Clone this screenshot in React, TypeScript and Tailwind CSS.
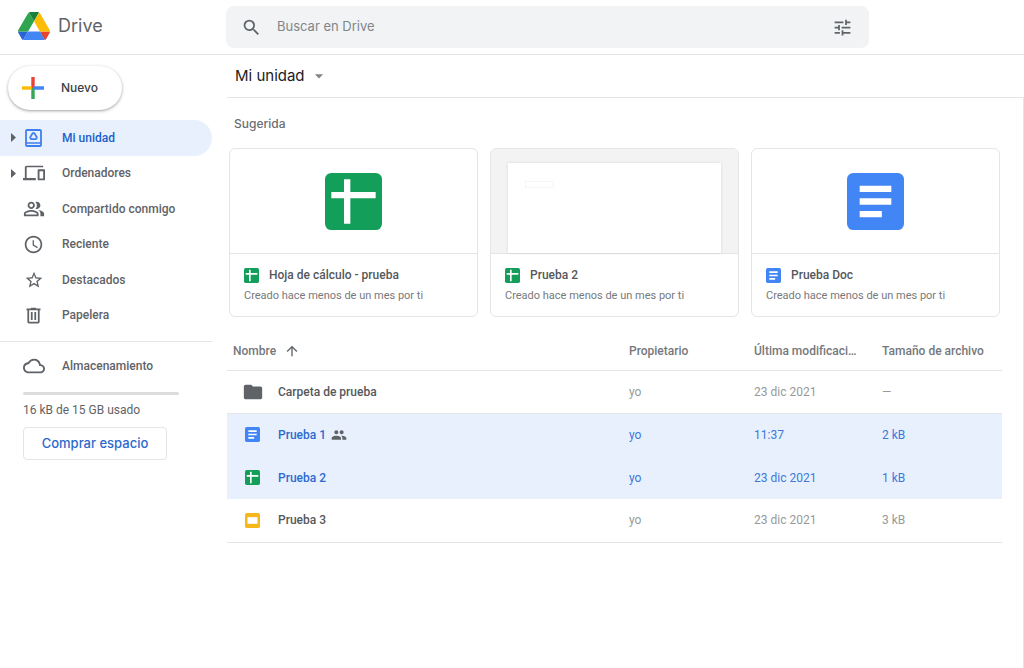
import type { ReactNode } from "react";
import {
  MdAccessTime,
  MdArrowDropDown,
  MdArrowUpward,
  MdFolder,
  MdOutlineCloud,
  MdOutlinePeopleAlt,
  MdPeople,
  MdSearch,
  MdStarOutline,
  MdTune,
} from "react-icons/md";
import { clsx } from "clsx";

type FileKind = "folder" | "doc" | "sheet" | "slides";

interface NavItem {
  label: string;
  icon: ReactNode;
  expandable?: boolean;
  active?: boolean;
}

interface FileRow {
  name: string;
  kind: FileKind;
  modified: string;
  size: string;
  shared?: boolean;
  selected?: boolean;
}

function DriveLogo() {
  return (
    <svg viewBox="0 0 87.3 78" className="w-8" aria-hidden="true">
      <path fill="#2a63d6" d="m6.6 66.85 3.85 6.65c.8 1.4 1.95 2.5 3.3 3.3l13.75-23.8h-27.5c0 1.55.4 3.1 1.2 4.5z" />
      <path fill="#2fa550" d="m43.65 25-13.75-23.8c-1.35.8-2.5 1.9-3.3 3.3l-25.4 44a9.06 9.06 0 0 0-1.2 4.5h27.5z" />
      <path fill="#e8442f" d="m73.55 76.8c1.35-.8 2.5-1.9 3.3-3.3l1.6-2.75 7.65-13.25c.8-1.4 1.2-2.95 1.2-4.5h-27.5l5.85 11.5z" />
      <path fill="#17803a" d="m43.65 25 13.75-23.8c-1.35-.8-2.9-1.2-4.5-1.2h-18.5c-1.6 0-3.15.45-4.5 1.2z" />
      <path fill="#4285f4" d="m59.8 53h-32.3l-13.75 23.8c1.35.8 2.9 1.2 4.5 1.2h50.8c1.6 0 3.15-.45 4.5-1.2z" />
      <path fill="#fdbc04" d="m73.4 26.5-12.7-22c-.8-1.4-1.95-2.5-3.3-3.3l-13.75 23.8 16.15 28h27.45c0-1.55-.4-3.1-1.2-4.5z" />
    </svg>
  );
}

function PlusIcon() {
  return (
    <svg viewBox="0 0 22 22" className="size-[22px]" aria-hidden="true">
      <path fill="#ea4335" d="M9.3 0h3.4v11H9.3z" />
      <path fill="#34a853" d="M9.3 11h3.4v11H9.3z" />
      <path fill="#fbbc04" d="M0 9.3h9.3v3.4H0z" />
      <path fill="#4285f4" d="M11 9.3h11v3.4h-9.3L11 11z" />
    </svg>
  );
}

function ExpandArrow() {
  return (
    <svg viewBox="0 0 5 9" className="h-[9px] w-[5px]" fill="currentColor" aria-hidden="true">
      <path d="M0 0l5 4.5L0 9z" />
    </svg>
  );
}

function MyDriveIcon() {
  return (
    <svg viewBox="0 0 17 18" className="h-[18px] w-[17px] text-[#3f7fec]" fill="none" stroke="currentColor" aria-hidden="true">
      <rect x="1" y="1" width="15" height="16" rx="1" strokeWidth="1.8" />
      <path d="M1 14h15" strokeWidth="1.5" />
      <path d="M7.6 4.2h1.8l2.5 4.3-.9 1.6H6l-.9-1.6z" strokeWidth="1.7" strokeLinejoin="round" />
    </svg>
  );
}

function DevicesIcon() {
  return (
    <svg viewBox="0 0 24 24" className="size-[22px]" fill="currentColor" aria-hidden="true">
      <path d="M4 5.7h18V4H4c-1.1 0-2 .9-2 2v11.5H0V20h14v-2.5H4V5.700zM23 8h-6c-.55 0-1 .45-1 1v10c0 .55.45 1 1 1h6c.55 0 1-.45 1-1V9c0-.55-.45-1-1-1zm-1 10h-4v-8h4v8z" />
    </svg>
  );
}

function TrashIcon() {
  return (
    <svg viewBox="0 0 24 24" className="size-[21px]" fill="currentColor" aria-hidden="true">
      <path d="M15 4V3H9v1H4v2h1v13c0 1.1.9 2 2 2h10c1.1 0 2-.9 2-2V6h1V4h-5zm2 15H7V6h10v13zM9 8h2v9H9zm4 0h2v9h-2z" />
    </svg>
  );
}

function FileIcon({ kind, className }: { kind: FileKind; className: string }) {
  if (kind === "folder") {
    return <MdFolder className="size-[22px] text-[#5f6368]" />;
  }
  return (
    <svg viewBox="0 0 18 18" className={className} aria-hidden="true">
      {kind === "doc" && (
        <>
          <rect width="18" height="18" rx="2" fill="#4285f4" />
          <path fill="#fff" d="M4 4h10v2H4zm0 4h10v2H4zm0 4h7v2H4z" />
        </>
      )}
      {kind === "sheet" && (
        <>
          <rect width="18" height="18" rx="2" fill="#139e59" />
          <path fill="#fff" d="M6 2h2v4h8v2H8v8H6V8H2V6h4z" />
        </>
      )}
      {kind === "slides" && (
        <>
          <rect width="18" height="18" rx="2" fill="#f4b81c" />
          <path fill="#fff" d="M3 5h12v8H3z" />
        </>
      )}
    </svg>
  );
}

const navItems: NavItem[] = [
  { label: "Mi unidad", icon: <MyDriveIcon />, expandable: true, active: true },
  { label: "Ordenadores", icon: <DevicesIcon />, expandable: true },
  { label: "Compartido conmigo", icon: <MdOutlinePeopleAlt className="size-[22px]" /> },
  { label: "Reciente", icon: <MdAccessTime className="size-[21px]" /> },
  { label: "Destacados", icon: <MdStarOutline className="size-[20px]" /> },
  { label: "Papelera", icon: <TrashIcon /> },
];

const suggested: { name: string; kind: FileKind; preview?: boolean }[] = [
  { name: "Hoja de cálculo - prueba", kind: "sheet" },
  { name: "Prueba 2", kind: "sheet", preview: true },
  { name: "Prueba Doc", kind: "doc" },
];

const files: FileRow[] = [
  { name: "Carpeta de prueba", kind: "folder", modified: "23 dic 2021", size: "—" },
  { name: "Prueba 1", kind: "doc", modified: "11:37", size: "2 kB", shared: true, selected: true },
  { name: "Prueba 2", kind: "sheet", modified: "23 dic 2021", size: "1 kB", selected: true },
  { name: "Prueba 3", kind: "slides", modified: "23 dic 2021", size: "3 kB" },
];

function Header() {
  return (
    <header className="flex h-[55px] items-center border-b border-[#e4e5e7]">
      <a href="#" className="flex w-[226px] shrink-0 items-center gap-2 pb-[2px] pl-[18px] font-['Inter',sans-serif] text-lg text-[#5f6368]">
        <DriveLogo />
        Drive
      </a>
      <form role="search" className="flex h-[42px] max-w-[643px] flex-1 items-center rounded-lg bg-[#f1f3f4] pr-4 pl-[15px] text-[#5f6368]">
        <button type="button" aria-label="Buscar">
          <MdSearch className="size-[21px]" />
        </button>
        <input
          type="text"
          aria-label="Buscar en Drive"
          placeholder="Buscar en Drive"
          className="ml-[15px] min-w-0 flex-1 bg-transparent font-['Inter',sans-serif] text-[13px] outline-none placeholder:text-[#80868b]"
        />
        <button type="button" aria-label="Opciones de búsqueda">
          <MdTune className="size-[21px]" />
        </button>
      </form>
    </header>
  );
}

function Sidebar() {
  return (
    <aside className="w-[212px] shrink-0 text-xs text-[#5f6368]">
      <button
        type="button"
        className="mt-[11px] ml-2 flex h-[44px] w-[114px] items-center gap-[17px] rounded-full bg-white pl-[14px] font-['Inter',sans-serif] text-xs font-medium text-[#3c4043] shadow-[0_1px_2px_rgba(60,64,67,0.3),0_1px_3px_1px_rgba(60,64,67,0.15)]"
      >
        <PlusIcon />
        Nuevo
      </button>
      <nav className="mt-[10px] grid h-[213px] grid-rows-6 font-medium">
        {navItems.map((item) => (
          <a
            key={item.label}
            href="#"
            className={clsx(
              "flex items-center rounded-r-full pl-[11px]",
              item.active && "bg-[#e8f0fe] text-[#1a61c9]",
            )}
          >
            <span className="w-[10px] text-[#5f6368]">
              {item.expandable && <ExpandArrow />}
            </span>
            <span className="flex w-[25px] justify-center">{item.icon}</span>
            <span className="ml-4">{item.label}</span>
          </a>
        ))}
      </nav>
      <section className="mt-2 border-t border-[#e4e5e7] pt-3 pl-[23px]">
        <a href="#" className="flex h-6 items-center gap-[17px] font-medium">
          <MdOutlineCloud className="size-[22px]" />
          Almacenamiento
        </a>
        <div
          role="progressbar"
          aria-label="Almacenamiento usado"
          aria-valuenow={0}
          className="mt-[14px] h-[3px] w-[156px] rounded-sm bg-[#dcdcdc]"
        />
        <p className="mt-[7px] leading-4">16 kB de 15 GB usado</p>
        <button
          type="button"
          className="mt-[9px] h-[33px] w-[144px] rounded border border-[#e4e5e7] font-['Inter',sans-serif] text-[13px] font-medium text-[#2b68cc]"
        >
          Comprar espacio
        </button>
      </section>
    </aside>
  );
}

function Suggested() {
  return (
    <section className="pr-[23px] pl-[2px]">
      <h2 className="pt-[17px] pl-[5px] font-['Inter',sans-serif] text-xs leading-[18px] font-medium text-[#6a6e73]">
        Sugerida
      </h2>
      <div className="mt-[15px] grid grid-cols-3 gap-3">
        {suggested.map((file) => (
          <a key={file.name} href="#" className="overflow-hidden rounded-md border border-[#e4e5e7]">
            <div
              className={clsx(
                "flex h-[105px] justify-center border-b border-[#e4e5e7]",
                file.preview ? "items-end bg-[#f3f3f3] px-[17px]" : "items-center",
              )}
            >
              {file.preview ? (
                <div className="h-[90px] flex-1 bg-white pt-[18px] pl-[17px] shadow-[0_0_3px_rgba(0,0,0,0.12)]">
                  <div className="h-[7px] w-[29px] border border-[#f5f5f5]" />
                </div>
              ) : (
                <FileIcon kind={file.kind} className="size-[57px]" />
              )}
            </div>
            <div className="px-[14px] pt-3 pb-3">
              <div className="flex h-[18px] items-center gap-[10px] text-xs font-medium text-[#55585c]">
                <FileIcon kind={file.kind} className="size-[15px]" />
                {file.name}
              </div>
              <p className="mt-1 text-[11px] leading-4 text-[#77797d]">
                Creado hace menos de un mes por ti
              </p>
            </div>
          </a>
        ))}
      </div>
    </section>
  );
}

function FileTable() {
  return (
    <div className="pr-[21px]">
      <table className="mt-4 w-full table-fixed text-left text-xs">
        <thead>
          <tr className="h-[37px] border-b border-[#e4e5e7] text-[#75787c]">
            <th className="pl-[6px] font-medium">
              <span className="flex items-center gap-2">
                Nombre
                <MdArrowUpward className="size-4 text-[#5f6368]" />
              </span>
            </th>
            <th className="w-[125px] font-medium">Propietario</th>
            <th className="w-[128px] truncate pr-6 font-medium">Última modificación</th>
            <th className="w-[120px] font-medium">Tamaño de archivo</th>
          </tr>
        </thead>
        <tbody>
          {files.map((file) => (
            <tr
              key={file.name}
              className={clsx(
                "h-[43px]",
                file.selected ? "bg-[#e8f0fe] text-[#3c78d8]" : "border-b border-[#e4e5e7] text-[#97999c]",
              )}
            >
              <td>
                <div className="flex items-center">
                  <span className="flex w-[51px] justify-center">
                    <FileIcon kind={file.kind} className="size-[15px]" />
                  </span>
                  <span className={clsx("font-medium", file.selected ? "text-[#2b6bd0]" : "text-[#55585c]")}>
                    {file.name}
                  </span>
                  {file.shared && <MdPeople className="ml-[5px] size-4 text-[#5f6368]" />}
                </div>
              </td>
              <td>yo</td>
              <td>{file.modified}</td>
              <td>{file.size}</td>
            </tr>
          ))}
        </tbody>
      </table>
    </div>
  );
}

export default function App() {
  return (
    <div className="flex min-h-screen flex-col bg-white font-['Roboto',sans-serif]">
      <Header />
      <div className="flex flex-1">
        <Sidebar />
        <main className="ml-[15px] flex min-w-0 flex-1 flex-col">
          <div className="flex h-[43px] items-center border-b border-[#e4e5e7] pl-2">
            <button type="button" className="flex items-center gap-1 font-['Inter',sans-serif] text-[15px] text-[#202124]">
              Mi unidad
              <MdArrowDropDown className="size-5 text-[#80868b]" />
            </button>
          </div>
          <div className="flex-1 border-r border-[#e4e5e7]">
            <Suggested />
            <FileTable />
          </div>
        </main>
      </div>
    </div>
  );
}
